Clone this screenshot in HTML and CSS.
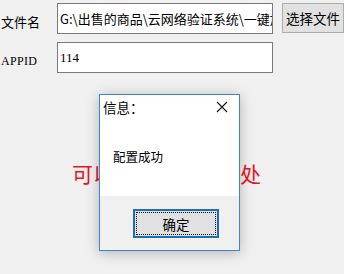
FILE: index.html
```html
<!DOCTYPE html>
<html lang="zh">
<head>
<meta charset="utf-8">
<link rel="stylesheet" href="styles.css">
</head>
<body>
<div class="form">
  <div class="row">
    <span class="label cjk">文件名</span>
    <input class="field cjk" type="text" value="G:\出售的商品\云网络验证系统\一键加加密工具\config.ini">
    <button class="btn cjk">选择文件</button>
  </div>
  <div class="row">
    <span class="label mono">APPID</span>
    <input class="field mono" type="text" value="114">
  </div>
  <div class="drop">可以拖放文件到此处</div>
</div>

<div class="dialog">
  <div class="titlebar">
    <span class="title">信息：</span>
    <svg class="close" width="12" height="12" viewBox="0 0 12 12"><path d="M1 1L11 11M11 1L1 11" stroke="#111" stroke-width="1.1" fill="none"/></svg>
  </div>
  <div class="body">配置成功</div>
  <div class="footer">
    <button class="ok"><span class="focus">确定</span></button>
  </div>
</div>
</body>
</html>
```
FILE: styles.css
```css
html, body {
  margin: 0;
  padding: 0;
  background: #f0f0f0;
  width: 344px;
  height: 274px;
  overflow: hidden;
}
.cjk {
  font-family: "Noto Sans CJK SC", sans-serif;
}
.mono {
  font-family: "Liberation Serif", serif;
}
.form {
  padding-top: 3px;
}
.row {
  display: flex;
  align-items: flex-start;
  height: 30px;
  margin-bottom: 9px;
}
.label {
  width: 57px;
  padding-left: 1px;
  box-sizing: border-box;
  font-size: 13px;
  color: #000;
  line-height: 30px;
  padding-top: 4px;
}
.label.mono {
  font-size: 12px;
  letter-spacing: 0.3px;
}
.field {
  width: 216px;
  height: 31px;
  box-sizing: border-box;
  border: 1px solid #7a7a7a;
  background: #fff;
  margin: 0;
  padding: 0 0 0 2px;
  font-size: 13px;
  color: #000;
  outline: none;
}
.field.mono {
  font-size: 13px;
}
.btn {
  margin-left: 9px;
  width: 62px;
  height: 30px;
  box-sizing: border-box;
  border: 1px solid #adadad;
  background: #e1e1e1;
  font-size: 13.5px;
  padding: 0;
  color: #000;
}
.drop {
  margin: 88px 0 0 72px;
  font-family: "Noto Sans CJK SC", sans-serif;
  font-size: 21px;
  line-height: 26px;
  color: #e8141e;
  white-space: nowrap;
}
.dialog {
  position: absolute;
  left: 99px;
  top: 94px;
  width: 141px;
  height: 157px;
  box-sizing: border-box;
  border: 1px solid #3f86c8;
  background: #fff;
  box-shadow: 0 2px 12px rgba(0,0,0,0.25);
  display: flex;
  flex-direction: column;
  font-family: "Noto Sans CJK SC", sans-serif;
}
.titlebar {
  height: 24px;
  display: flex;
  align-items: center;
  justify-content: space-between;
  padding: 0 11px 0 3px;
}
.title {
  font-size: 13.5px;
  color: #000;
}
.close {
  display: block;
}
.body {
  height: 77px;
  padding: 28px 0 0 13px;
  box-sizing: border-box;
  font-size: 12.5px;
  color: #000;
}
.footer {
  flex: 1;
  background: #f0f0f0;
  padding: 13px 0 0 33px;
}
.ok {
  width: 86px;
  height: 29px;
  box-sizing: border-box;
  border: 2px solid #1c6fb4;
  background: #e1e1e1;
  padding: 1px;
  margin: 0;
  display: flex;
}
.focus {
  flex: 1;
  border: 1px dotted #000;
  display: flex;
  align-items: center;
  justify-content: center;
  font-family: "Noto Sans CJK SC", sans-serif;
  font-size: 13.5px;
  color: #000;
}
```
